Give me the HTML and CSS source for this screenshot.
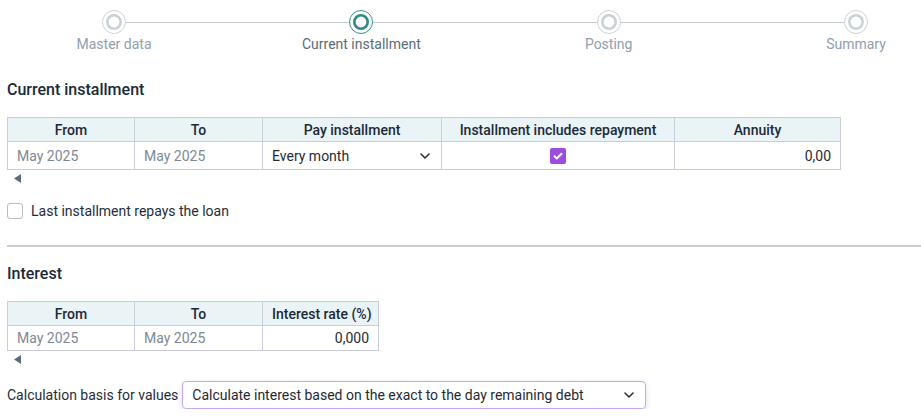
FILE: index.html
```html
<!DOCTYPE html>
<html lang="en">
<head>
<meta charset="utf-8">
<title>Loan wizard</title>
<link rel="stylesheet" href="styles.css">
</head>
<body>
<div class="page">
  <div class="stepper">
    <div class="track">
      <svg class="step-dot" viewBox="0 0 24 24"><circle cx="12" cy="12" r="11.5" fill="#fff" stroke="#c9d1d8" stroke-width="1"/><circle cx="12" cy="12" r="6.7" fill="none" stroke="#c9d1d8" stroke-width="2.6"/></svg>
      <span class="track-line"></span>
      <svg class="step-dot" viewBox="0 0 24 24"><circle cx="12" cy="12" r="11.5" fill="#fff" stroke="#3a8f88" stroke-width="1"/><circle cx="12" cy="12" r="6.7" fill="none" stroke="#2f8a82" stroke-width="2.6"/></svg>
      <span class="track-line"></span>
      <svg class="step-dot" viewBox="0 0 24 24"><circle cx="12" cy="12" r="11.5" fill="#fff" stroke="#c9d1d8" stroke-width="1"/><circle cx="12" cy="12" r="6.7" fill="none" stroke="#c9d1d8" stroke-width="2.6"/></svg>
      <span class="track-line"></span>
      <svg class="step-dot" viewBox="0 0 24 24"><circle cx="12" cy="12" r="11.5" fill="#fff" stroke="#c9d1d8" stroke-width="1"/><circle cx="12" cy="12" r="6.7" fill="none" stroke="#c9d1d8" stroke-width="2.6"/></svg>
    </div>
    <div class="labels">
      <span class="step-label">Master data</span>
      <span class="step-label active">Current installment</span>
      <span class="step-label">Posting</span>
      <span class="step-label">Summary</span>
    </div>
  </div>

  <h2 class="section-title first">Current installment</h2>
  <table class="grid grid-install">
    <colgroup>
      <col class="c-from"><col class="c-to"><col class="c-pay"><col class="c-incl"><col class="c-ann">
    </colgroup>
    <thead>
      <tr><th>From</th><th>To</th><th>Pay installment</th><th>Installment includes repayment</th><th>Annuity</th></tr>
    </thead>
    <tbody>
      <tr>
        <td class="muted">May 2025</td>
        <td class="muted">May 2025</td>
        <td><div class="cell-select"><span>Every month</span><svg class="chev" viewBox="0 0 10 6"><path d="M1 1l4 4 4-4" fill="none" stroke="#1f2a33" stroke-width="1.5" stroke-linecap="round" stroke-linejoin="round"/></svg></div></td>
        <td class="center"><span class="tick"><svg viewBox="0 0 16 16"><path d="M4.5 8.3l2.3 2.2 4.7-4.8" fill="none" stroke="#fff" stroke-width="2" stroke-linecap="round" stroke-linejoin="round"/></svg></span></td>
        <td class="num">0,00</td>
      </tr>
    </tbody>
  </table>
  <div class="scroll-hint"><svg viewBox="0 0 7 9"><path d="M7 0v9L0 4.5z" fill="#5b6d7c"/></svg></div>

  <label class="check-row"><span class="box"></span><span>Last installment repays the loan</span></label>

  <hr class="divider">

  <h2 class="section-title">Interest</h2>
  <table class="grid grid-interest">
    <colgroup>
      <col class="c-from"><col class="c-to"><col class="c-rate">
    </colgroup>
    <thead>
      <tr><th>From</th><th>To</th><th>Interest rate (%)</th></tr>
    </thead>
    <tbody>
      <tr>
        <td class="muted">May 2025</td>
        <td class="muted">May 2025</td>
        <td class="num">0,000</td>
      </tr>
    </tbody>
  </table>
  <div class="scroll-hint"><svg viewBox="0 0 7 9"><path d="M7 0v9L0 4.5z" fill="#5b6d7c"/></svg></div>

  <div class="calc-row">
    <span class="calc-label">Calculation basis for values</span>
    <div class="select">
      <span>Calculate interest based on the exact to the day remaining debt</span>
      <svg class="chev" viewBox="0 0 10 6"><path d="M1 1l4 4 4-4" fill="none" stroke="#1f2a33" stroke-width="1.5" stroke-linecap="round" stroke-linejoin="round"/></svg>
    </div>
  </div>
</div>
</body>
</html>
```

FILE: styles.css
```css
* { box-sizing: border-box; }
html, body { margin: 0; padding: 0; background: #fff; }
body {
  font-family: Roboto, "Liberation Sans", Arial, sans-serif;
  font-size: 14px;
  color: #1d2b38;
  overflow: hidden;
}
.page { padding: 0 0 0 7px; }

/* stepper */
.stepper { margin-top: 10px; }
.track {
  display: flex;
  align-items: center;
  height: 24px;
  padding-left: 95px;
  margin-right: 53px;
}
.step-dot { width: 24px; height: 24px; flex: none; display: block; }
.track-line { flex: 1; height: 1px; background: #c5cdd3; }
.labels {
  display: flex;
  justify-content: space-between;
  padding-left: 42px;
  margin-top: 2px;
}
.step-label {
  width: 130px;
  text-align: center;
  line-height: 16px;
  color: #8fa0ae;
  white-space: nowrap;
}
.step-label.active { color: #5a6b79; }

/* headings */
.section-title {
  margin: 0;
  font-size: 16px;
  line-height: 20px;
  font-weight: 500;
  color: #1a2a37;
}
.section-title.first { margin-top: 28px; margin-bottom: 17px; }

/* grids */
.grid {
  border-collapse: collapse;
  table-layout: fixed;
}
.grid th, .grid td {
  border: 1px solid #cacdd9;
  padding: 0 9px;
  white-space: nowrap;
}
.grid th {
  background: #eaf3f6;
  font-weight: 500;
  height: 24px;
  text-align: center;
  color: #1b2a37;
}
.grid td { height: 28px; color: #1f2a33; }
.grid td.muted { color: #7d8994; }
.grid td.num { text-align: right; }
.grid td.center { text-align: center; }
.grid-install { width: 834px; }
.grid-interest { width: 372px; }
.grid-interest td { height: 25px; }
.c-from { width: 127px; }
.c-to { width: 128px; }
.c-pay { width: 179px; }
.c-incl { width: 233px; }
.c-ann { width: 166px; }
.c-rate { width: 116px; }

.cell-select {
  display: flex;
  align-items: center;
  justify-content: space-between;
  padding-right: 2px;
}
.chev { width: 10px; height: 6px; display: block; }
.tick {
  display: inline-flex;
  width: 16px;
  height: 16px;
  border-radius: 2px;
  background: #9b4ddf;
  vertical-align: middle;
}
.tick svg { width: 16px; height: 16px; display: block; }

.scroll-hint { height: 16px; padding: 4px 0 0 7px; }
.scroll-hint svg { width: 7px; height: 9px; display: block; }

/* checkbox row */
.check-row {
  display: flex;
  align-items: center;
  gap: 8px;
  margin-top: 17px;
  height: 16px;
  color: #1f2d3a;
}
.box {
  width: 16px;
  height: 16px;
  border: 1px solid #b7bdc5;
  border-radius: 3px;
  background: #fff;
}

.divider {
  border: 0;
  height: 2px;
  background: #c8ced3;
  margin: 26px 0 17px 0;
}

.grid-interest { margin-top: 17px; }

/* calc row */
.calc-row {
  display: flex;
  align-items: center;
  gap: 4px;
  margin-top: 14px;
}
.calc-label { color: #1f2d3a; white-space: nowrap; }
.select {
  width: 464px;
  height: 28px;
  border: 1px solid #c9a5f6;
  border-radius: 4px;
  box-shadow: 0 2px 6px rgba(40, 40, 70, 0.14);
  display: flex;
  align-items: center;
  justify-content: space-between;
  padding: 0 11px 0 9px;
  color: #1f2a33;
  background: #fff;
}
```
